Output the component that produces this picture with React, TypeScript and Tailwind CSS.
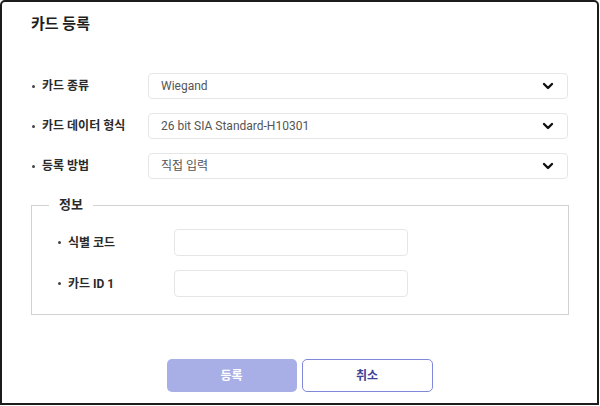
import React from "react";

const FONT = "font-['Roboto','Noto_Sans_CJK_KR',sans-serif]";

function Chevron() {
  return (
    <svg width="12" height="8" viewBox="0 0 12 8" className="shrink-0">
      <path d="M2 2 L6 6 L10 2" fill="none" stroke="#111" strokeWidth="2.4" strokeLinecap="round" strokeLinejoin="round" />
    </svg>
  );
}

function Label({ text, width }: { text: string; width: string }) {
  return (
    <div className={`flex shrink-0 items-center ${width}`}>
      <span className="mr-[7px] ml-[1px] h-[3px] w-[3px] rounded-full bg-[#444]" />
      <span className="text-[12px] font-bold text-[#2a2a2a]">{text}</span>
    </div>
  );
}

function SelectRow({ label, value }: { label: string; value: string }) {
  return (
    <div className="flex h-[26px] items-center">
      <Label text={label} width="w-[117px]" />
      <div className="flex h-[26px] flex-1 items-center justify-between rounded-[4px] border border-[#e6e6e6] pr-[13px] pl-[12px]">
        <span className="text-[12px] text-[#555]">{value}</span>
        <Chevron />
      </div>
    </div>
  );
}

function InputRow({ label }: { label: string }) {
  return (
    <div className="flex h-[27px] items-center">
      <Label text={label} width="w-[117px]" />
      <div className="h-[27px] w-[234px] rounded-[4px] border border-[#e6e6e6]" />
    </div>
  );
}

export default function App() {
  return (
    <div className={`h-[406px] w-[600px] bg-white ${FONT}`}>
      <div className="flex h-[405px] w-[599px] flex-col rounded-t-[5px] border-2 border-[#1c1c1c] pr-[29px] pl-[29px]">
        <h1 className="mt-[12px] h-[20px] text-[15px] leading-[20px] font-bold text-[#1e1e1e]">카드 등록</h1>

        <div className="mt-[39px] flex flex-col gap-[14px]">
          <SelectRow label="카드 종류" value="Wiegand" />
          <SelectRow label="카드 데이터 형식" value="26 bit SIA Standard-H10301" />
          <SelectRow label="등록 방법" value="직접 입력" />
        </div>

        <fieldset className="mt-[17px] mr-[-1px] border border-[#d2d2d2] pr-0 pb-[17px] pl-[17px]">
          <legend className="px-[10px] text-[13px] leading-[18px] font-bold text-[#2a2a2a]">정보</legend>
          <div className="mt-[15px] flex flex-col gap-[14px] pl-[8px]">
            <InputRow label="식별 코드" />
            <InputRow label="카드 ID 1" />
          </div>
        </fieldset>

        <div className="mt-[44px] flex justify-center gap-[5px]">
          <button type="button" className="h-[33px] w-[130px] rounded-[5px] bg-[#a8afe6] text-[12px] font-bold text-white">
            등록
          </button>
          <button type="button" className="h-[33px] w-[131px] rounded-[5px] border-[1.5px] border-[#8088dc] bg-white text-[12px] font-bold text-[#3c4299]">
            취소
          </button>
        </div>
      </div>
    </div>
  );
}
